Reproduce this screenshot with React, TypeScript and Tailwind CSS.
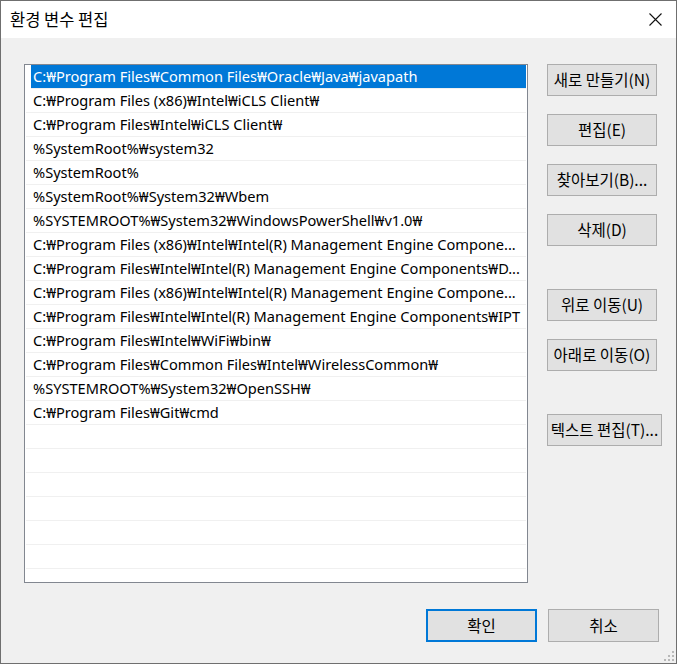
import React from 'react';

const paths = [
  'C:₩Program Files₩Common Files₩Oracle₩Java₩javapath',
  'C:₩Program Files (x86)₩Intel₩iCLS Client₩',
  'C:₩Program Files₩Intel₩iCLS Client₩',
  '%SystemRoot%₩system32',
  '%SystemRoot%',
  '%SystemRoot%₩System32₩Wbem',
  '%SYSTEMROOT%₩System32₩WindowsPowerShell₩v1.0₩',
  'C:₩Program Files (x86)₩Intel₩Intel(R) Management Engine Compone...',
  'C:₩Program Files₩Intel₩Intel(R) Management Engine Components₩D...',
  'C:₩Program Files (x86)₩Intel₩Intel(R) Management Engine Compone...',
  'C:₩Program Files₩Intel₩Intel(R) Management Engine Components₩IPT',
  'C:₩Program Files₩Intel₩WiFi₩bin₩',
  'C:₩Program Files₩Common Files₩Intel₩WirelessCommon₩',
  '%SYSTEMROOT%₩System32₩OpenSSH₩',
  'C:₩Program Files₩Git₩cmd',
];

const emptyRows = 7;

function SideButton({ label, wide = false }: { label: string; wide?: boolean }) {
  return (
    <button
      className={`h-[32px] ${wide ? 'w-[115px]' : 'w-[110px]'} bg-[#e1e1e1] border border-[#adadad] text-[15.5px] text-black flex items-center justify-center whitespace-nowrap`}
    >
      {label}
    </button>
  );
}

export default function App() {
  return (
    <div
      className="w-[677px] h-[664px] border border-[#6f6f6f] flex flex-col bg-[#f0f0f0] text-black"
      style={{ fontFamily: '"Noto Sans", "Noto Sans CJK KR", sans-serif' }}
    >
      {/* 제목 표시줄 */}
      <div className="h-[37px] bg-white flex items-center justify-between pl-[9px] pr-[14px]">
        <span className="text-[16.5px] leading-none" style={{ fontFamily: '"Noto Sans CJK KR", sans-serif' }}>
          환경 변수 편집
        </span>
        <svg width="13" height="13" viewBox="0 0 13 13">
          <path d="M0.5 0.5 L12.5 12.5 M12.5 0.5 L0.5 12.5" stroke="#111" strokeWidth="1.1" fill="none" />
        </svg>
      </div>

      {/* 본문 */}
      <div className="flex-1 flex flex-col pl-[23px] pr-[13px] pt-[26px] relative">
        <div className="flex">
          {/* 목록 */}
          <div className="w-[504px] h-[519px] border border-[#828790] bg-white pl-[1px] pr-[1px] overflow-hidden">
            {paths.map((p, i) => (
              <div
                key={i}
                className={`h-[24px] border-b border-[#f0f0f0] flex items-center ${i === 0 ? 'ml-[5px] bg-[#0078d7] text-white' : 'pl-[5px]'}`}
              >
                <span className="pl-[2px] text-[14.6px] whitespace-nowrap">{p}</span>
              </div>
            ))}
            {Array.from({ length: emptyRows }).map((_, i) => (
              <div key={`e${i}`} className="h-[24px] border-b border-[#f0f0f0]" />
            ))}
          </div>

          {/* 버튼 */}
          <div className="ml-[19px] flex flex-col" style={{ fontFamily: '"Noto Sans CJK KR", sans-serif' }}>
            <div className="flex flex-col gap-[18px]">
              <SideButton label="새로 만들기(N)" />
              <SideButton label="편집(E)" />
              <SideButton label="찾아보기(B)..." />
              <SideButton label="삭제(D)" />
            </div>
            <div className="flex flex-col gap-[18px] mt-[43px]">
              <SideButton label="위로 이동(U)" />
              <SideButton label="아래로 이동(O)" />
            </div>
            <div className="mt-[43px]">
              <SideButton label="텍스트 편집(T)..." wide />
            </div>
          </div>
        </div>

        {/* 하단 버튼 */}
        <div className="flex justify-end gap-[11px] mt-[26px] pr-[4px]" style={{ fontFamily: '"Noto Sans CJK KR", sans-serif' }}>
          <button className="w-[111px] h-[33px] bg-[#e1e1e1] border-2 border-[#0078d7] text-[15.5px]">확인</button>
          <button className="w-[111px] h-[33px] bg-[#e1e1e1] border border-[#adadad] text-[15.5px]">취소</button>
        </div>

        {/* 크기 조절 손잡이 */}
        <svg className="absolute right-[1px] bottom-[1px]" width="12" height="12" viewBox="0 0 12 12">
          <rect x="9" y="1" width="2" height="2" fill="#b8b8b8" />
          <rect x="5" y="5" width="2" height="2" fill="#b8b8b8" />
          <rect x="9" y="5" width="2" height="2" fill="#b8b8b8" />
          <rect x="1" y="9" width="2" height="2" fill="#b8b8b8" />
          <rect x="5" y="9" width="2" height="2" fill="#b8b8b8" />
          <rect x="9" y="9" width="2" height="2" fill="#b8b8b8" />
        </svg>
      </div>
    </div>
  );
}
